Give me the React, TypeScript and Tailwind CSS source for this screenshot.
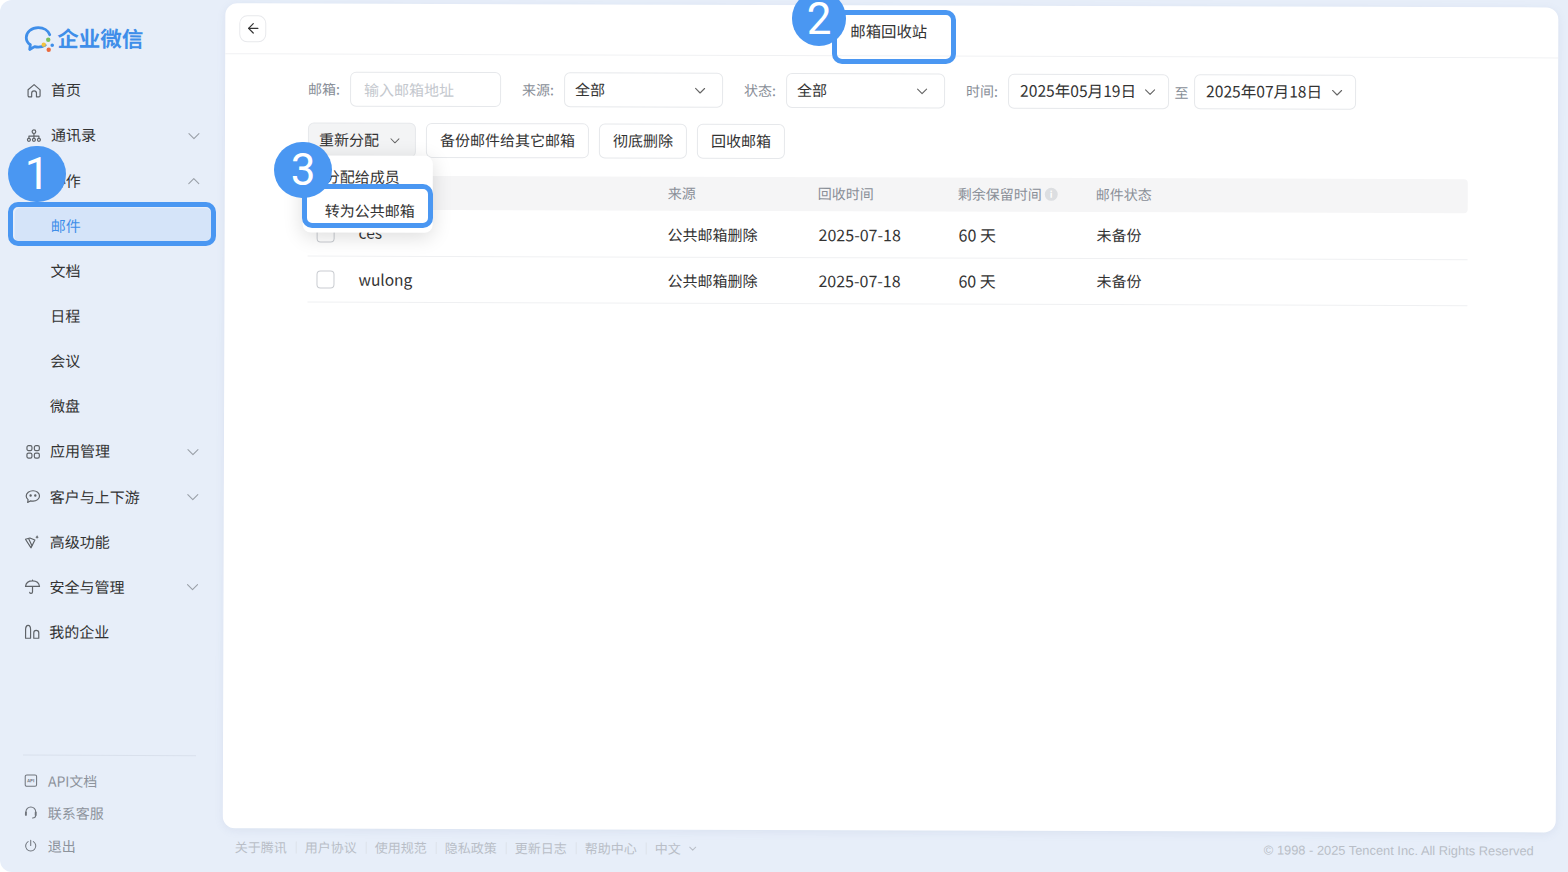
import React from 'react';
import { ArrowLeft, ChevronDown, ChevronUp } from 'lucide-react';

const Icon = ({ children, size = 'w-4 h-4' }: { children: React.ReactNode; size?: string }) => (
  <svg viewBox="0 0 16 16" fill="none" stroke="currentColor" strokeWidth="1.2" strokeLinecap="round" strokeLinejoin="round" className={`${size} shrink-0`}>
    {children}
  </svg>
);

const icons: Record<string, React.ReactNode> = {
  home: <path d="M2 7.2 8 2l6 5.2V13a1.2 1.2 0 0 1-1.2 1.2H10.4V10.600a2.400 2.400 0 0 0-4.800 0v3.600H3.200A1.200 1.200 0 0 1 2 13z" />,
  org: (
    <>
      <circle cx="8" cy="4" r="1.800" />
      <circle cx="3" cy="12.200" r="1.500" />
      <circle cx="8" cy="12.200" r="1.500" />
      <circle cx="13" cy="12.200" r="1.500" />
      <path d="M3 10.500V8.500h10v2M8 6v4.500" />
    </>
  ),
  apps: (
    <>
      <rect x="2" y="2" width="5" height="5" rx="1.600" />
      <rect x="9.400" y="2" width="5" height="5" rx="1.600" />
      <rect x="2" y="9.400" width="5" height="5" rx="1.600" />
      <rect x="9.400" y="9.400" width="5" height="5" rx="1.600" />
    </>
  ),
  chat: (
    <>
      <path d="M8.200 2.100c3.600 0 6.500 2.300 6.500 5.200s-2.900 5.200-6.500 5.200c-.8 0-1.600-.1-2.300-.3l-3 1.600.4-2.800C2 9.900 1.400 8.700 1.400 7.300c0-2.900 3.100-5.200 6.800-5.200z" />
      <circle cx="5.800" cy="6.800" r=".6" fill="currentColor" />
      <circle cx="10.500" cy="6.800" r=".6" fill="currentColor" />
    </>
  ),
  star: (
    <>
      <path d="M.8 5.600 5.200 4.400l5 2-3.800 7.800z" />
      <path d="M4 5.200 7.200 11.800" />
      <path d="M12.400 1c.2 1.600.8 2.200 2.400 2.400-1.600.2-2.200.8-2.400 2.400-.2-1.600-.8-2.200-2.400-2.400 1.600-.2 2.200-.8 2.400-2.400z" fill="currentColor" stroke="none" />
    </>
  ),
  umbrella: <path d="M1 7.800C1.500 4.400 4.400 2.300 8 2.300s6.500 2.100 7 5.500zM8 1.400v.9M8 7.800v5.600c0 .9-.6 1.400-1.400 1.400-.8 0-1.300-.4-1.400-1.100" />,
  building: (
    <>
      <path d="M1.200 14.600V6c0-2.300 1-4.300 2.500-4.300S6.200 3.700 6.200 6v8.600z" />
      <path d="M9.400 14.600V9c0-1.300.8-2.300 2.400-2.300S14.400 7.700 14.400 9v5.600z" />
    </>
  ),
  api: (
    <>
      <rect x="1.500" y="1.500" width="13" height="13" rx="1.800" />
      <text x="8" y="9.800" textAnchor="middle" fontSize="5" fontWeight="700" fill="currentColor" stroke="none">API</text>
    </>
  ),
  headset: (
    <>
      <path d="M2.400 8V7.200a5.600 5.600 0 0 1 11.200 0V8" />
      <path d="M2.400 7.800v2.800M13.600 7.800v2.800" strokeWidth="2.200" />
      <path d="M13.600 11c0 2-1.400 3.200-3.600 3.200" />
    </>
  ),
  power: <path d="M8 1.800v6M5 3.400a5.800 5.800 0 1 0 6 0" />,
};

type NavItem = { label: string; icon?: string; arrow?: 'down' | 'up'; active?: boolean };

const navItems: NavItem[] = [
  { label: '首页', icon: 'home' },
  { label: '通讯录', icon: 'org', arrow: 'down' },
  { label: '协作', arrow: 'up' },
  { label: '邮件', active: true },
  { label: '文档' },
  { label: '日程' },
  { label: '会议' },
  { label: '微盘' },
  { label: '应用管理', icon: 'apps', arrow: 'down' },
  { label: '客户与上下游', icon: 'chat', arrow: 'down' },
  { label: '高级功能', icon: 'star' },
  { label: '安全与管理', icon: 'umbrella', arrow: 'down' },
  { label: '我的企业', icon: 'building' },
];

const bottomItems = [
  { label: 'API文档', icon: 'api' },
  { label: '联系客服', icon: 'headset' },
  { label: '退出', icon: 'power' },
];

const footerLinks = ['关于腾讯', '用户协议', '使用规范', '隐私政策', '更新日志', '帮助中心'];

const rows = [
  { name: 'ces', source: '公共邮箱删除', date: '2025-07-18', left: '60 天', status: '未备份' },
  { name: 'wulong', source: '公共邮箱删除', date: '2025-07-18', left: '60 天', status: '未备份' },
];

const Logo = () => (
  <svg viewBox="0 0 30 28" className="w-[30px] h-[28px] shrink-0" fill="none">
    <path d="M21 20.500c-2 1.400-4.500 2-7 2-1.300 0-2.500-.2-3.600-.5L5.500 24.800l.6-4.700C3.300 18.200 2 15.500 2 12.800 2 7.300 7.400 3 14 3c5.400 0 10 2.900 11.500 7" stroke="#3f8ee9" strokeWidth="2.800" strokeLinecap="round" strokeLinejoin="round" />
    <circle cx="24" cy="15" r="2.200" fill="#7cbf5a" />
    <circle cx="28" cy="20.500" r="1.800" fill="#3f8ee9" />
    <circle cx="19.500" cy="20" r="2.200" fill="#f3c33f" />
    <circle cx="24.500" cy="25" r="2.200" fill="#ea6a3d" />
  </svg>
);

const Select = ({ value, width, date }: { value: string; width: string; date?: boolean }) => (
  <div className={`${width} h-[35px] flex items-center justify-between border border-[#e6e8eb] rounded-md bg-white text-[#333] ${date ? 'pl-[11px] pr-[9px] text-[15.600px]' : 'pl-[10px] pr-[13px] text-[15px]'}`}>
    <span className="-translate-y-px">{value}</span>
    <ChevronDown className="w-[18px] h-[18px] text-[#666]" strokeWidth={1.5} />
  </div>
);

const Label = ({ children }: { children: React.ReactNode }) => (
  <span className="text-sm text-[#888e97] w-[42px] shrink-0 -translate-y-px">{children}</span>
);

const Sidebar = () => (
  <aside className="w-[224px] shrink-0 flex flex-col">
    <div className="h-[70px] flex items-center gap-[3px] pl-[23px] pt-[11px]">
      <Logo />
      <span className="text-[21.500px] font-bold text-[#3f8ee9]">企业微信</span>
    </div>
    <nav className="flex flex-col">
      {navItems.map(item => (
        <div key={item.label} className="h-[45.150px] flex items-center">
          <div className={`w-[197px] h-[35px] ml-[14px] pl-[11px] pr-[8px] flex items-center rounded-md text-[15px] ${item.active ? 'bg-[#d5e4f9] text-[#3f8ee9]' : 'text-[#333]'}`}>
            {item.icon && <span className="text-[#5f6368] mr-[9px]"><Icon>{icons[item.icon]}</Icon></span>}
            <span className={item.icon ? '' : 'ml-[25px]'}>{item.label}</span>
            {item.arrow === 'down' && <ChevronDown className="w-5 h-5 ml-auto text-[#9aa0a8]" strokeWidth={1.3} />}
            {item.arrow === 'up' && <ChevronUp className="w-5 h-5 ml-auto text-[#9aa0a8]" strokeWidth={1.3} />}
          </div>
        </div>
      ))}
    </nav>
    <div className="mt-auto ml-[24px] mr-[27px] pt-[9px] pb-[8px] border-t border-[#d9e0ec] flex flex-col">
      {bottomItems.map(item => (
        <div key={item.label} className="h-[32.500px] pl-px flex items-center gap-[10px] text-sm text-[#8d939c]">
          <span className="text-[#70757d]"><Icon size="w-[14px] h-[14px]">{icons[item.icon]}</Icon></span>
          <span>{item.label}</span>
        </div>
      ))}
    </div>
  </aside>
);

const Filters = () => (
  <div className="flex items-center h-[35px] text-sm">
    <Label>邮箱:</Label>
    <div className="w-[151px] h-[35px] flex items-center px-[13px] border border-[#e6e8eb] rounded-md text-[15px] text-[#c4c8ce]">输入邮箱地址</div>
    <span className="w-[21px]" />
    <Label>来源:</Label>
    <Select value="全部" width="w-[159px]" />
    <span className="w-[21px]" />
    <Label>状态:</Label>
    <Select value="全部" width="w-[159px]" />
    <span className="w-[21px]" />
    <Label>时间:</Label>
    <Select value="2025年05月19日" width="w-[161px]" date />
    <span className="w-[25px] text-center text-[#888e97]">至</span>
    <Select value="2025年07月18日" width="w-[162px]" date />
  </div>
);

const Actions = () => (
  <div className="relative flex items-center gap-[10px] mt-[16px] text-[15px] text-[#333]">
    <div className="w-[108px] h-[35px] flex items-center justify-between pl-[10px] pr-[12px] border border-[#e6e8eb] rounded-md bg-[#f3f4f5]">
      <span>重新分配</span>
      <ChevronDown className="w-4 h-4 text-[#666]" strokeWidth={1.5} />
    </div>
    <div className="w-[163px] h-[35px] flex items-center justify-center border border-[#e6e8eb] rounded-md">备份邮件给其它邮箱</div>
    <div className="w-[88px] h-[35px] flex items-center justify-center border border-[#e6e8eb] rounded-md">彻底删除</div>
    <div className="w-[88px] h-[35px] flex items-center justify-center border border-[#e6e8eb] rounded-md">回收邮箱</div>
    {/* dropdown of 重新分配 */}
    <div className="absolute left-[-5px] top-[33px] z-10 w-[130px] h-[77px] bg-white rounded-lg shadow-[0_4px_20px_rgba(0,0,0,0.14)] pl-[22px] flex flex-col">
      <div className="h-[42px] flex items-center">分配给成员</div>
      <div className="h-[27px] flex items-center">转为公共邮箱</div>
    </div>
  </div>
);

const gridCols = 'grid grid-cols-[360px_150px_140px_138px_1fr] items-center';

const MailTable = () => (
  <div className="mt-[18px]">
    <div className={`${gridCols} h-[34px] pb-[2px] bg-[#f5f5f6] rounded text-sm text-[#8a8f98]`}>
      <span />
      <span>来源</span>
      <span>回收时间</span>
      <span className="flex items-center gap-[3px]">
        剩余保留时间
        <span className="w-[13px] h-[13px] rounded-full bg-[#dcdee1] text-white text-[9px] leading-[13px] text-center font-bold">i</span>
      </span>
      <span>邮件状态</span>
    </div>
    {rows.map(row => (
      <div key={row.name} className={`${gridCols} h-[46.500px] border-b border-[#eff0f2] text-[15px] text-[#333]`}>
        <div className="flex items-center pl-[9px] gap-[24px]">
          <span className="w-[18px] h-[18px] border border-[#c9ccd1] rounded-sm bg-white translate-y-px" />
          <span className="text-[15.500px]">{row.name}</span>
        </div>
        <span className="translate-y-px">{row.source}</span>
        <span className="text-base translate-x-px">{row.date}</span>
        <span className="text-base translate-x-px">{row.left}</span>
        <span className="translate-x-px">{row.status}</span>
      </div>
    ))}
  </div>
);

const Main = () => (
  <div className="flex-1 min-w-0 flex flex-col pr-[11px] pt-[5px]">
    <main className="h-[825px] bg-white rounded-xl shadow-[0_2px_8px_rgba(120,140,180,0.12)] flex flex-col">
      <header className="relative h-[51px] shrink-0 border-b border-[#f0f1f3] flex items-center pl-[14px]">
        <button className="w-[27px] h-[27px] flex items-center justify-center border border-[#e8e9ec] rounded-lg text-[#333]">
          <ArrowLeft className="w-4 h-4" strokeWidth={1.8} />
        </button>
        <span className="absolute left-[625px] top-[14px] text-[15.400px] leading-[22px] text-[#333]">邮箱回收站</span>
      </header>
      <section className="pl-[83px] pr-[90px] pt-[17px]">
        <Filters />
        <Actions />
        <MailTable />
      </section>
    </main>
    <footer className="flex-1 flex items-center pl-[12px] pr-[22px] pb-[4px] text-[13px] text-[#b9bec7]">
      {footerLinks.map(link => (
        <React.Fragment key={link}>
          <span>{link}</span>
          <span className="w-px h-[12px] bg-[#dde2ea] mx-[8.500px]" />
        </React.Fragment>
      ))}
      <span>中文</span>
      <ChevronDown className="w-3 h-3 ml-[6px]" strokeWidth={2} />
      <span className="ml-auto text-[12.850px] font-['Liberation_Sans',sans-serif]">© 1998 - 2025 Tencent Inc. All Rights Reserved</span>
    </footer>
  </div>
);

// numbered callouts sit on top of the screenshot
const Callout = ({ n, pos }: { n: number; pos: string }) => (
  <div className={`absolute ${pos} rounded-full bg-[#4a97f2] text-white flex items-center justify-center font-['Roboto',sans-serif] font-normal text-[44px] leading-none`}>
    {n}
  </div>
);

const App = () => (
  <div className="relative w-[1568px] h-[872px] overflow-hidden rounded-l-[12px] bg-[#e7eef9] font-['Noto_Sans_CJK_SC','Noto_Sans',sans-serif]">
    <div className="w-full h-full flex rotate-[0.18deg]">
      <Sidebar />
      <Main />
    </div>
    <div className="absolute left-[8px] top-[202px] w-[208px] h-[44px] border-[5px] border-[#4a97f2] rounded-[10px]" />
    <div className="absolute left-[832px] top-[10px] w-[124px] h-[54px] border-[5px] border-[#4a97f2] rounded-[10px]" />
    <div className="absolute left-[302px] top-[184px] w-[131px] h-[44px] border-[5px] border-[#4a97f2] rounded-[10px]" />
    <Callout n={1} pos="left-[8px] top-[146px] w-[58px] h-[56px]" />
    <Callout n={2} pos="left-[792px] top-[-9px] w-[54px] h-[55px]" />
    <Callout n={3} pos="left-[274px] top-[142px] w-[58px] h-[56px]" />
  </div>
);

export default App;
